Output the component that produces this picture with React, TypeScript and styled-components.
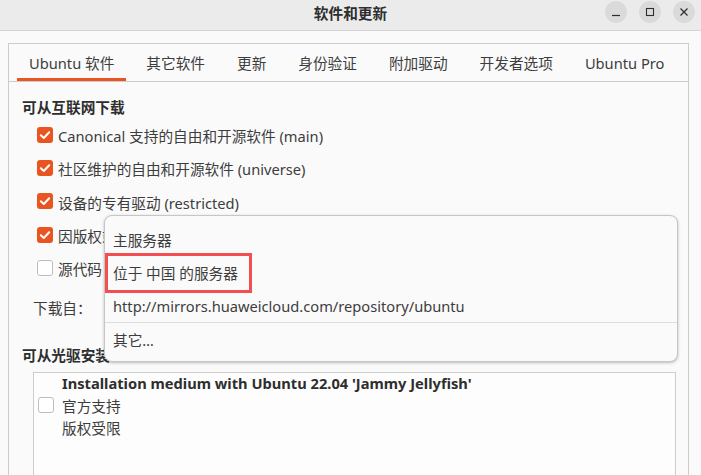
import React from "react";
import styled, {createGlobalStyle, css} from "styled-components";

const GlobalStyle = createGlobalStyle`
  html, body {
    margin: 0;
    padding: 0;
    background: #fafafa;
  }
  body {
    font-family: "Noto Sans", "Noto Sans CJK SC", sans-serif;
    font-size: 14.67px;
    color: #3d3d3d;
    overflow: hidden;
  }
`;

const tabs = ["Ubuntu 软件", "其它软件", "更新", "身份验证", "附加驱动", "开发者选项", "Ubuntu Pro"];

const sources = [
  {label: "Canonical 支持的自由和开源软件 (main)", checked: true},
  {label: "社区维护的自由和开源软件 (universe)", checked: true},
  {label: "设备的专有驱动 (restricted)", checked: true},
  {label: "因版权或法律问题受限的软件 (multiverse)", checked: true},
  {label: "源代码", checked: false},
];

const CheckBox = ({checked}: {checked?: boolean}) => (
  <Box checked={checked}>
    {checked && (
      <svg width="16" height="16" viewBox="0 0 16 16">
        <polyline points="3.8,8.2 6.8,11 12.2,5.2" fill="none" stroke="#fff" strokeWidth="2" strokeLinecap="round" strokeLinejoin="round"/>
      </svg>
    )}
  </Box>
);

export default function App() {
  return (
    <Window>
      <GlobalStyle/>
      <TitleBar>
        <span/>
        <Title>软件和更新</Title>
        <Controls>
          <WinButton>
            <svg width="16" height="16" viewBox="0 0 16 16">
              <line x1="4" y1="11.5" x2="12" y2="11.5" stroke="#2e2e2e" strokeWidth="1.2"/>
            </svg>
          </WinButton>
          <WinButton>
            <svg width="16" height="16" viewBox="0 0 16 16">
              <rect x="4.5" y="4.5" width="7" height="7" fill="none" stroke="#2e2e2e" strokeWidth="1.1"/>
            </svg>
          </WinButton>
          <WinButton>
            <svg width="16" height="16" viewBox="0 0 16 16">
              <path d="M4.5 4.5 L11.5 11.5 M11.5 4.5 L4.5 11.5" stroke="#2e2e2e" strokeWidth="1.2"/>
            </svg>
          </WinButton>
        </Controls>
      </TitleBar>

      <Body>
        <Notebook>
          <TabBar>
            {tabs.map((t, i) => (
              <Tab key={t} active={i === 0}>{t}</Tab>
            ))}
          </TabBar>
          <Page>
            <SectionTitle>可从互联网下载</SectionTitle>
            <CheckList>
              {sources.map(s => (
                <CheckRow key={s.label}>
                  <CheckBox checked={s.checked}/>
                  <span>{s.label}</span>
                </CheckRow>
              ))}
            </CheckList>
            <DownloadRow>下载自：</DownloadRow>
            <SectionTitle>可从光驱安装</SectionTitle>
            <MediaBox>
              <MediaRow>
                <CheckBox/>
                <MediaText>
                  <strong>Installation medium with Ubuntu 22.04 'Jammy Jellyfish'</strong>
                  <span>官方支持</span>
                  <span>版权受限</span>
                </MediaText>
              </MediaRow>
            </MediaBox>
          </Page>
        </Notebook>
      </Body>

      <Popup>
        <MenuItem>主服务器</MenuItem>
        <MenuItem>
          <Highlight>位于 中国 的服务器</Highlight>
        </MenuItem>
        <MenuItem>http://mirrors.huaweicloud.com/repository/ubuntu</MenuItem>
        <MenuSeparator/>
        <MenuItem>其它…</MenuItem>
      </Popup>
    </Window>
  );
}

const Window = styled.div`
  position: relative;
  width: 701px;
  height: 475px;
  overflow: hidden;
  background: #fafafa;
`;

const TitleBar = styled.div`
  height: 30px;
  display: grid;
  grid-template-columns: 1fr auto 1fr;
  background: #ebebeb;
  border-bottom: 1px solid #d4d4d4;
`;

const Title = styled.div`
  font-weight: 700;
  font-size: 14.67px;
  line-height: 26px;
  color: #2e2e2e;
`;

const Controls = styled.div`
  display: flex;
  justify-content: flex-end;
  gap: 12px;
  padding: 1px 6px 0 0;
`;

const WinButton = styled.div`
  width: 22px;
  height: 22px;
  border-radius: 50%;
  background: #dadada;
  display: flex;
  align-items: center;
  justify-content: center;
`;

const Body = styled.div`
  padding: 12px 12px 0 8px;
`;

const Notebook = styled.div`
  border: 1px solid #cdcdcd;
  border-bottom: none;
  height: 440px;
`;

const TabBar = styled.div`
  display: flex;
  gap: 8px;
  padding: 0 8px;
  height: 37px;
  border-bottom: 1px solid #cdcdcd;
`;

const Tab = styled.div<{active?: boolean}>`
  display: flex;
  align-items: center;
  padding: 3px 12px 0 12px;
  box-sizing: border-box;
  border-bottom: 3px solid transparent;
  white-space: nowrap;
  ${({active}) => active && css`
    border-bottom-color: #e95420;
  `}
`;

const Page = styled.div`
  padding: 14px 13px 0 13px;
`;

const SectionTitle = styled.div`
  font-weight: 700;
  line-height: 22px;
  color: #2e2e2e;
`;

const CheckList = styled.div`
  display: flex;
  flex-direction: column;
  padding: 1px 0 0 15px;
`;

const CheckRow = styled.div`
  display: flex;
  align-items: center;
  gap: 5px;
  height: 33.3px;
  white-space: nowrap;
`;

const Box = styled.div<{checked?: boolean}>`
  width: 16px;
  height: 16px;
  flex: none;
  box-sizing: border-box;
  border-radius: 3px;
  margin-top: -2px;
  display: flex;
  ${({checked}) => checked
    ? css`background: #e95420;`
    : css`background: #fff; border: 1px solid #bdbdbd;`}
`;

const DownloadRow = styled.div`
  height: 36px;
  margin: 4px 0 19px 11px;
  display: flex;
  align-items: center;
`;

const MediaBox = styled.div`
  margin: 6px 0 0 11px;
  width: 643px;
  height: 120px;
  box-sizing: border-box;
  border: 1px solid #cdcdcd;
  background: #fdfdfd;
  padding: 0 0 0 4px;
`;

const MediaRow = styled.div`
  display: flex;
  align-items: center;
  gap: 8px;
  margin-top: -1px;
`;

const MediaText = styled.div`
  display: flex;
  flex-direction: column;
  line-height: 22.5px;
  strong {
    font-weight: 700;
    color: #2e2e2e;
  }
`;

const Popup = styled.div`
  position: absolute;
  left: 104px;
  top: 215px;
  width: 574px;
  box-sizing: border-box;
  padding: 7px 0 5px;
  background: #fafafa;
  border: 1px solid #c6c6c6;
  border-radius: 8px;
  box-shadow: 0 1px 3px rgba(0, 0, 0, 0.25);
`;

const MenuItem = styled.div`
  height: 33px;
  display: flex;
  align-items: center;
  padding: 0 8px;
  white-space: nowrap;
`;

const Highlight = styled.span`
  display: inline-flex;
  align-items: center;
  height: 40px;
  box-sizing: border-box;
  margin-left: -8px;
  padding: 0 11px 0 5px;
  border: 3px solid #f25050;
`;

const MenuSeparator = styled.div`
  height: 1px;
  background: #dedede;
`;
